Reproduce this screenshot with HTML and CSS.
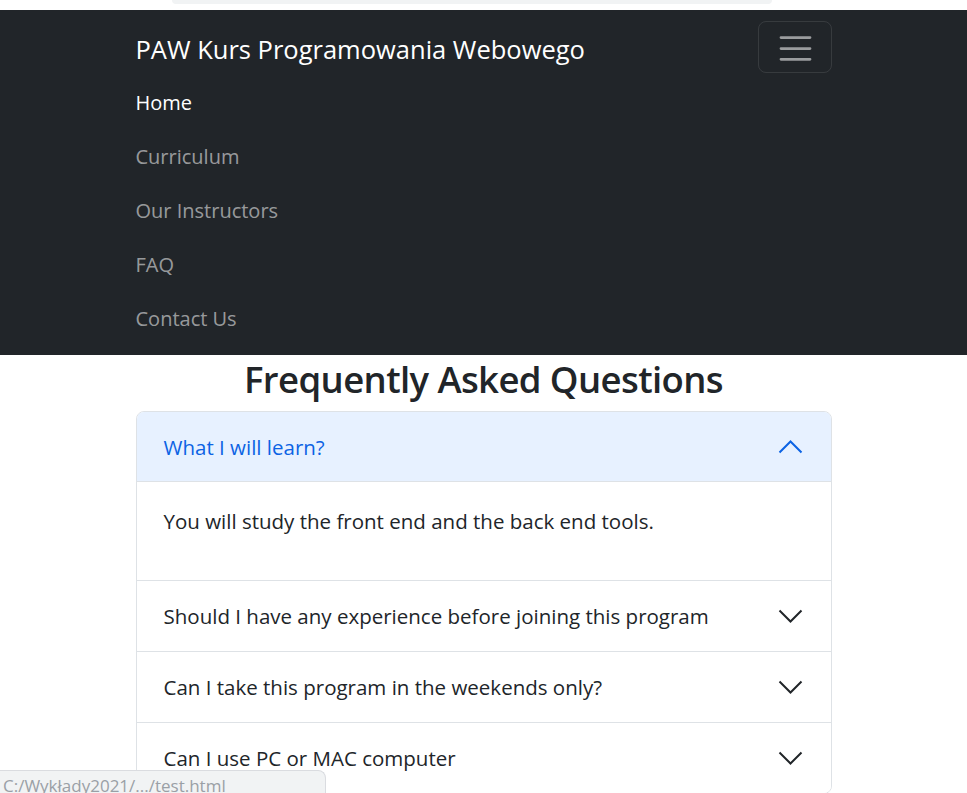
FILE: index.html
```html
<!DOCTYPE html>
<html lang="en">
<head>
<meta charset="utf-8">
<title>PAW Kurs Programowania Webowego</title>
<link rel="stylesheet" href="styles.css">
</head>
<body>
<div class="topstrip"><div class="topbar"></div></div>
<nav class="navbar">
  <div class="container">
    <div class="nav-head">
      <a class="brand" href="#">PAW Kurs Programowania Webowego</a>
      <button class="toggler" type="button" aria-label="Toggle navigation">
        <svg width="72" height="50" viewBox="0 0 72 50">
          <path d="M22 15.6H51M22 26.6H51M22 37.3H51" stroke="rgba(255,255,255,0.55)" stroke-width="2.8" stroke-linecap="round" fill="none"/>
        </svg>
      </button>
    </div>
    <ul class="nav">
      <li><a class="nav-link active" href="#">Home</a></li>
      <li><a class="nav-link" href="#">Curriculum</a></li>
      <li><a class="nav-link" href="#">Our Instructors</a></li>
      <li><a class="nav-link" href="#">FAQ</a></li>
      <li><a class="nav-link" href="#">Contact Us</a></li>
    </ul>
  </div>
</nav>
<main class="container">
  <h2 class="title">Frequently Asked Questions</h2>
  <div class="accordion">
    <div class="acc-item">
      <button class="acc-btn open" type="button">
        <span>What I will learn?</span>
        <svg class="chev" width="25" height="14" viewBox="0 0 25 14"><path d="M1.5 12.5L12.5 1.5L23.5 12.5" fill="none" stroke="#0c63e4" stroke-width="2"/></svg>
      </button>
      <div class="acc-body"><p>You will study the front end and the back end tools.</p></div>
    </div>
    <div class="acc-item">
      <button class="acc-btn" type="button">
        <span>Should I have any experience before joining this program</span>
        <svg class="chev" width="25" height="14" viewBox="0 0 25 14"><path d="M1.5 1.5L12.5 12.5L23.5 1.5" fill="none" stroke="#212529" stroke-width="2"/></svg>
      </button>
    </div>
    <div class="acc-item">
      <button class="acc-btn" type="button">
        <span>Can I take this program in the weekends only?</span>
        <svg class="chev" width="25" height="14" viewBox="0 0 25 14"><path d="M1.5 1.5L12.5 12.5L23.5 1.5" fill="none" stroke="#212529" stroke-width="2"/></svg>
      </button>
    </div>
    <div class="acc-item">
      <button class="acc-btn" type="button">
        <span>Can I use PC or MAC computer</span>
        <svg class="chev" width="25" height="14" viewBox="0 0 25 14"><path d="M1.5 1.5L12.5 12.5L23.5 1.5" fill="none" stroke="#212529" stroke-width="2"/></svg>
      </button>
    </div>
  </div>
</main>
<div class="status">C:/Wykłady2021/.../test.html</div>
</body>
</html>
```

FILE: styles.css
```css
* { box-sizing: border-box; }
html, body { margin: 0; padding: 0; }
body {
  font-family: "Open Sans", "Noto Sans", sans-serif;
  font-size: 20.5px;
  line-height: 30px;
  color: #212529;
  background: #fff;
  height: 793px;
  overflow: hidden;
}
.topstrip {
  height: 10px;
  background: #fff;
  padding-left: 172px;
}
.topbar {
  width: 600px;
  height: 4px;
  background: #f1f3f4;
  border-radius: 0 0 8px 8px;
}
.container {
  width: 696px;
  margin: 0 auto;
}
.navbar {
  background: #212529;
  padding: 11px 0 9px;
}
.nav-head {
  display: flex;
  align-items: center;
  justify-content: space-between;
  height: 52px;
}
.brand {
  color: #fff;
  text-decoration: none;
  font-size: 25.5px;
  line-height: 36px;
  padding-top: 4px;
}
.toggler {
  width: 74px;
  height: 52px;
  padding: 0;
  margin: 0;
  background: transparent;
  border: 1px solid rgba(255,255,255,0.1);
  border-radius: 8px;
  display: flex;
}
.nav {
  list-style: none;
  margin: 3px 0 0;
  padding: 0;
}
.nav-link {
  display: block;
  padding: 12px 0;
  font-size: 20px;
  line-height: 30px;
  color: rgba(255,255,255,0.55);
  text-decoration: none;
}
.nav-link.active { color: #fff; }
.title {
  margin: 0 0 8px;
  text-align: center;
  font-size: 36.5px;
  line-height: 48px;
  font-weight: 600;
  letter-spacing: -0.6px;
}
.accordion {
  border: 1px solid #dee2e6;
  border-radius: 8px;
  overflow: hidden;
}
.acc-item + .acc-item { border-top: 1px solid #dee2e6; }
.acc-btn {
  width: 100%;
  display: flex;
  align-items: center;
  justify-content: space-between;
  padding: 20px 28px 20px 27px;
  border: 0;
  margin: 0;
  background: #fff;
  font: inherit;
  color: #212529;
  text-align: left;
}
.acc-btn.open {
  background: #e7f1ff;
  color: #0c63e4;
  box-shadow: inset 0 -1px 0 #dee2e6;
}
.chev { flex: none; }
.acc-body {
  padding: 24px 27px;
}
.acc-body p { margin: 0 0 20px; }
.status {
  position: fixed;
  left: 0;
  bottom: 0;
  width: 326px;
  height: 23px;
  padding: 4px 0 0 3px;
  background: #f1f3f4;
  border-top: 1px solid #dadce0;
  border-right: 1px solid #dadce0;
  border-top-right-radius: 8px;
  color: #9aa0a6;
  font-size: 17px;
  line-height: 22px;
  overflow: hidden;
  white-space: nowrap;
}
```
